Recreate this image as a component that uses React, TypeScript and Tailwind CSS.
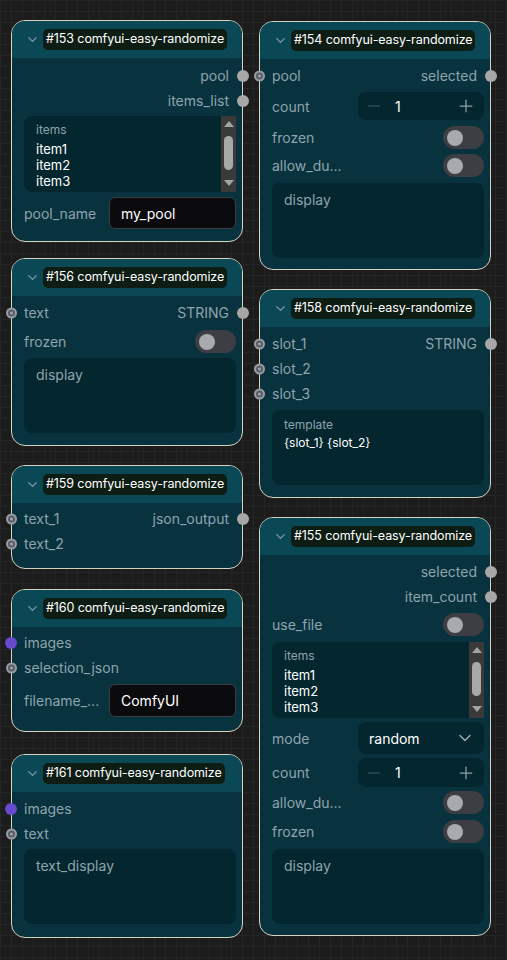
import { ChevronDown, Minus, Plus } from 'lucide-react';
import type { ReactNode } from 'react';

// graph canvas with randomize nodes

function Node({ title, className, children }: { title: string; className: string; children: ReactNode }) {
  return (
    <div className={`absolute w-[232px] rounded-[14px] border border-[#d6d2bf] bg-[#07323e] ${className}`}>
      <div className="h-[37px] flex items-center pl-[13px] rounded-t-[13px] bg-[#0b4856]">
        <ChevronDown className="w-[15px] h-[15px] text-[#7f9aa3]" strokeWidth={2} />
        <div className="ml-[3px] h-[21px] px-[3px] flex items-center rounded-[5px] bg-[#0e1d14] text-[12.5px] tracking-[-0.1px] text-white whitespace-nowrap">
          {title}
        </div>
      </div>
      {children}
    </div>
  );
}

function InSocket({ purple }: { purple?: boolean }) {
  if (purple) {
    return <div className="absolute left-[-7px] top-1/2 -translate-y-1/2 w-[12px] h-[12px] rounded-full bg-[#6749cc]" />;
  }
  return (
    <div className="absolute left-[-6px] top-1/2 -translate-y-1/2 w-[11px] h-[11px] rounded-full bg-[#9b9ca3] flex items-center justify-center">
      <div className="w-[7px] h-[7px] rounded-full bg-[#5a5f67] flex items-center justify-center">
        <div className="w-[3px] h-[3px] rounded-full bg-[#a3a4ab]" />
      </div>
    </div>
  );
}

function OutSocket() {
  return <div className="absolute right-[-7px] top-1/2 -translate-y-1/2 w-[12px] h-[12px] rounded-full bg-[#a7a7a7]" />;
}

function SlotRow({ input, output, purple }: { input?: string; output?: string; purple?: boolean }) {
  return (
    <div className="relative h-[25px] flex items-center justify-between pl-[12px] pr-[13px] text-[14px] text-[#8fa4ad]">
      {input && <InSocket purple={purple} />}
      <span>{input}</span>
      <span>{output}</span>
      {output && <OutSocket />}
    </div>
  );
}

function Toggle({ label, className }: { label: string; className: string }) {
  return (
    <div className={`flex items-center justify-between pl-[12px] pr-[6px] ${className}`}>
      <span className="text-[14px] text-[#8fa4ad]">{label}</span>
      <div className="w-[41px] h-[23px] rounded-full bg-[#3c3e43] flex items-center pl-[4px]">
        <div className="w-[16px] h-[16px] rounded-full bg-[#a9a9b0]" />
      </div>
    </div>
  );
}

function Stepper({ className }: { className: string }) {
  return (
    <div className={`flex items-center pl-[12px] pr-[6px] ${className}`}>
      <span className="w-[86px] text-[14px] text-[#8fa4ad]">count</span>
      <div className="flex-1 h-full rounded-lg bg-[#03262f] flex items-center pl-[7px] pr-[8px]">
        <Minus className="w-[18px] h-[18px] text-[#3f5e67]" strokeWidth={1.5} />
        <span className="ml-[12px] text-[14px] text-white">1</span>
        <Plus className="ml-auto w-[20px] h-[20px] text-[#8fa1a8]" strokeWidth={1.5} />
      </div>
    </div>
  );
}

function TextBox({ label, className }: { label: string; className: string }) {
  return (
    <div className={`ml-[12px] mr-[6px] rounded-lg bg-[#03262f] px-[12px] pt-[6px] text-[14px] text-[#8fa4ad] ${className}`}>
      {label}
    </div>
  );
}

function ItemsBox({ className }: { className: string }) {
  return (
    <div className={`ml-[12px] mr-[6px] h-[76px] flex rounded-lg bg-[#03262f] ${className}`}>
      <div className="flex-1 pl-[12px] pt-[6px] text-[13px] leading-[16px]">
        <div className="text-[12px] text-[#8fa4ad] mb-[3px]">items</div>
        <div className="text-white">item1</div>
        <div className="text-white">item2</div>
        <div className="text-white">item3</div>
      </div>
      <div className="w-[15px] bg-[#3a3a3a] flex flex-col items-center pt-[5px] pb-[6px]">
        <div className="w-0 h-0 border-l-[5px] border-r-[5px] border-b-[6px] border-l-transparent border-r-transparent border-b-[#a3a3a3]" />
        <div className="mt-[9px] w-[9px] h-[34px] rounded-full bg-[#a8a8a8]" />
        <div className="flex-1" />
        <div className="w-0 h-0 border-l-[5px] border-r-[5px] border-t-[6px] border-l-transparent border-r-transparent border-t-[#a3a3a3]" />
      </div>
    </div>
  );
}

function TextInput({ label, value, className }: { label: string; value: string; className: string }) {
  return (
    <div className={`flex items-center pl-[12px] pr-[6px] ${className}`}>
      <span className="w-[85px] text-[14px] text-[#8fa4ad] truncate pr-[2px]">{label}</span>
      <div className="flex-1 h-full rounded-md border border-[#3a3d40] bg-[#0b0b0d] flex items-center pl-[11px] text-[14px] text-white">
        {value}
      </div>
    </div>
  );
}

export default function App() {
  return (
    <div className="relative w-[507px] h-[960px] overflow-hidden bg-[#1c1c1c] bg-[linear-gradient(#252525_1px,transparent_1px),linear-gradient(90deg,#252525_1px,transparent_1px)] bg-[size:11px_11px] font-['Inter',sans-serif]">
      {/* left column */}
      <Node title="#153 comfyui-easy-randomize" className="left-[11px] top-[20px] h-[222px]">
        <div className="pt-[5px]">
          <SlotRow output="pool" />
          <SlotRow output="items_list" />
          <ItemsBox className="mt-[3px]" />
          <TextInput label="pool_name" value="my_pool" className="mt-[5px] h-[32px]" />
        </div>
      </Node>

      <Node title="#156 comfyui-easy-randomize" className="left-[11px] top-[258px] h-[188px]">
        <div className="pt-[4px]">
          <SlotRow input="text" output="STRING" />
          <Toggle label="frozen" className="mt-[5px] h-[23px]" />
          <TextBox label="display" className="mt-[5px] h-[75px]" />
        </div>
      </Node>

      <Node title="#159 comfyui-easy-randomize" className="left-[11px] top-[465px] h-[104px]">
        <div className="pt-[3px]">
          <SlotRow input="text_1" output="json_output" />
          <SlotRow input="text_2" />
        </div>
      </Node>

      <Node title="#160 comfyui-easy-randomize" className="left-[11px] top-[589px] h-[143px]">
        <div className="pt-[3px]">
          <SlotRow input="images" purple />
          <SlotRow input="selection_json" />
          <TextInput label="filename_..." value="ComfyUI" className="mt-[4px] h-[33px]" />
        </div>
      </Node>

      <Node title="#161 comfyui-easy-randomize" className="left-[11px] top-[754px] h-[184px]">
        <div className="pt-[4px]">
          <SlotRow input="images" purple />
          <SlotRow input="text" />
          <TextBox label="text_display" className="mt-[3px] h-[75px]" />
        </div>
      </Node>

      {/* right column */}
      <Node title="#154 comfyui-easy-randomize" className="left-[259px] top-[21px] h-[249px]">
        <div className="pt-[4px]">
          <SlotRow input="pool" output="selected" />
          <Stepper className="mt-[4px] h-[28px]" />
          <Toggle label="frozen" className="mt-[6px] h-[23px]" />
          <Toggle label="allow_du..." className="mt-[5px] h-[23px]" />
          <TextBox label="display" className="mt-[6px] h-[75px]" />
        </div>
      </Node>

      <Node title="#158 comfyui-easy-randomize" className="left-[259px] top-[289px] h-[209px]">
        <div className="pt-[4px]">
          <SlotRow input="slot_1" output="STRING" />
          <SlotRow input="slot_2" />
          <SlotRow input="slot_3" />
          <div className="mt-[4px] ml-[12px] mr-[6px] h-[75px] rounded-lg bg-[#03262f] px-[12px] pt-[6px] text-[12px] leading-[18px]">
            <div className="text-[#8fa4ad]">template</div>
            <div className="text-white">{'{slot_1} {slot_2}'}</div>
          </div>
        </div>
      </Node>

      <Node title="#155 comfyui-easy-randomize" className="left-[259px] top-[517px] h-[419px]">
        <div className="pt-[4px]">
          <SlotRow output="selected" />
          <SlotRow output="item_count" />
          <Toggle label="use_file" className="mt-[4px] h-[23px]" />
          <ItemsBox className="mt-[6px]" />
          <div className="mt-[4px] h-[32px] flex items-center pl-[12px] pr-[6px]">
            <span className="w-[86px] text-[14px] text-[#8fa4ad]">mode</span>
            <div className="flex-1 h-full rounded-lg bg-[#03262f] flex items-center pl-[11px] pr-[9px] text-[14px] text-white">
              random
              <ChevronDown className="ml-auto w-[20px] h-[20px] text-[#9aabb2]" strokeWidth={1.75} />
            </div>
          </div>
          <Stepper className="mt-[4px] h-[29px]" />
          <Toggle label="allow_du..." className="mt-[4px] h-[23px]" />
          <Toggle label="frozen" className="mt-[6px] h-[23px]" />
          <TextBox label="display" className="mt-[6px] h-[75px]" />
        </div>
      </Node>
    </div>
  );
}
